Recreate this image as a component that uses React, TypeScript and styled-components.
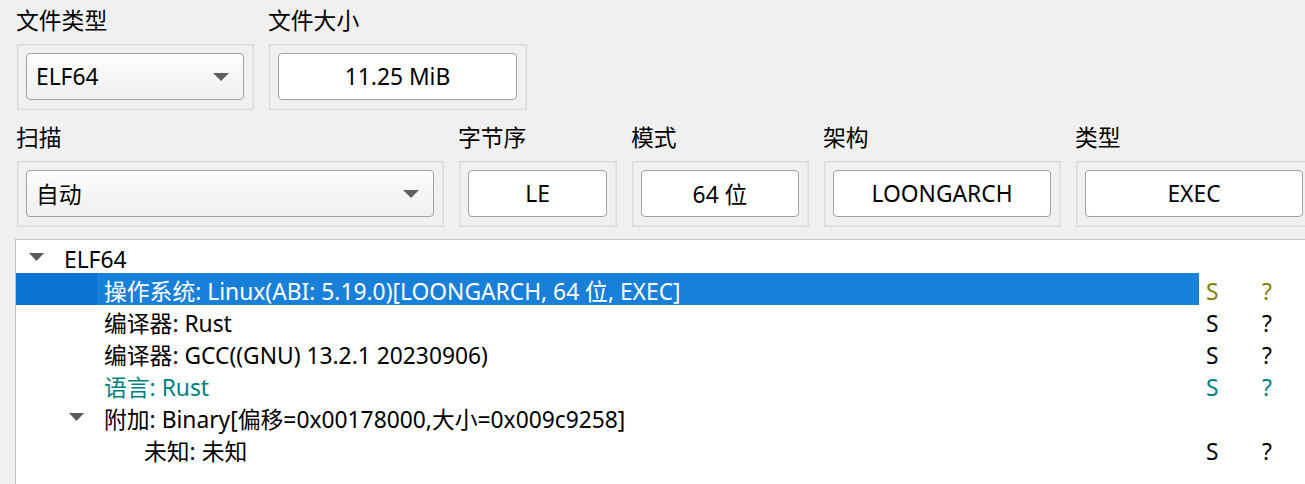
import styled, { createGlobalStyle } from 'styled-components';

const GlobalStyle = createGlobalStyle`
  html, body {
    margin: 0;
    padding: 0;
    background: #f0f0f0;
    overflow: hidden;
  }
  body {
    font-family: "Noto Sans", "Noto Sans CJK SC", sans-serif;
    color: #000;
  }
`;

type Item = {
  level: number;
  text: string;
  expandable?: boolean;
  selected?: boolean;
  tone?: 'olive' | 'teal';
  flags?: boolean;
};

const items: Item[] = [
  { level: 0, text: 'ELF64', expandable: true },
  { level: 1, text: '操作系统: Linux(ABI: 5.19.0)[LOONGARCH, 64 位, EXEC]', selected: true, tone: 'olive', flags: true },
  { level: 1, text: '编译器: Rust', flags: true },
  { level: 1, text: '编译器: GCC((GNU) 13.2.1 20230906)', flags: true },
  { level: 1, text: '语言: Rust', tone: 'teal', flags: true },
  { level: 1, text: '附加: Binary[偏移=0x00178000,大小=0x009c9258]', expandable: true },
  { level: 2, text: '未知: 未知', flags: true },
];

const toneColor = (tone?: 'olive' | 'teal') =>
  tone === 'olive' ? '#808000' : tone === 'teal' ? '#008080' : '#000';

const ComboArrow = () => (
  <svg width="16" height="8" viewBox="0 0 16 8">
    <polygon points="0,0 16,0 8,8" fill="#606060" />
  </svg>
);

const BranchArrow = () => (
  <svg width="15" height="8" viewBox="0 0 15 8">
    <polygon points="0,0 15,0 7.5,8" fill="#5a5a5a" />
  </svg>
);

const App = () => {
  return (
    <Page>
      <GlobalStyle />
      <Form>
        <FieldRow>
          <Field $width={238}>
            <Label>文件类型</Label>
            <Frame>
              <Combo>
                <span>ELF64</span>
                <ComboArrow />
              </Combo>
            </Frame>
          </Field>
          <Field $width={259}>
            <Label>文件大小</Label>
            <Frame>
              <ValueBox>11.25 MiB</ValueBox>
            </Frame>
          </Field>
        </FieldRow>
        <FieldRow>
          <Field $width={428}>
            <Label>扫描</Label>
            <Frame>
              <Combo>
                <span>自动</span>
                <ComboArrow />
              </Combo>
            </Frame>
          </Field>
          <Field $width={159}>
            <Label>字节序</Label>
            <Frame>
              <ValueBox>LE</ValueBox>
            </Frame>
          </Field>
          <Field $width={178}>
            <Label>模式</Label>
            <Frame>
              <ValueBox>64 位</ValueBox>
            </Frame>
          </Field>
          <Field $width={238}>
            <Label>架构</Label>
            <Frame>
              <ValueBox>LOONGARCH</ValueBox>
            </Frame>
          </Field>
          <Field $width={238}>
            <Label>类型</Label>
            <Frame>
              <ValueBox>EXEC</ValueBox>
            </Frame>
          </Field>
        </FieldRow>
      </Form>
      <Tree>
        {items.map((item, i) => (
          <Row key={i}>
            <MainCell $selected={item.selected}>
              <Indent $level={item.level} />
              <Branch>{item.expandable && <BranchArrow />}</Branch>
              <ItemText $selected={item.selected} $color={toneColor(item.tone)}>
                {item.text}
              </ItemText>
            </MainCell>
            <FlagCell $width={56} $color={toneColor(item.tone)}>
              {item.flags ? 'S' : ''}
            </FlagCell>
            <FlagCell $color={toneColor(item.tone)}>{item.flags ? '?' : ''}</FlagCell>
          </Row>
        ))}
      </Tree>
    </Page>
  );
};

export default App;

const Page = styled.div`
  width: 1305px;
  height: 484px;
  overflow: hidden;
  background: #f0f0f0;
`;

const Form = styled.div`
  display: flex;
  flex-direction: column;
  gap: 13px;
  padding: 6px 0 0 16px;
`;

const FieldRow = styled.div`
  display: flex;
  gap: 14px;
  white-space: nowrap;
`;

const Field = styled.div<{ $width: number }>`
  display: flex;
  flex-direction: column;
  gap: 8px;
  width: ${(p) => p.$width}px;
  flex: none;
`;

const Label = styled.div`
  font-size: 22.8px;
  line-height: 30px;
  height: 30px;
`;

const Frame = styled.div`
  border: 1px solid #dadada;
  box-shadow: inset 0 0 0 1px #e7e7e7;
  padding: 8px 9px 9px 8px;
  margin-left: 1px;
`;

const Control = styled.div`
  height: 47px;
  box-sizing: border-box;
  border: 1px solid #a2a2a2;
  border-radius: 4px;
  font-size: 22.8px;
  display: flex;
  align-items: center;
`;

const Combo = styled(Control)`
  justify-content: space-between;
  padding: 0 14px 0 9px;
  background: linear-gradient(to bottom, #fcfcfc, #f0f0f0);
`;

const ValueBox = styled(Control)`
  justify-content: center;
  background: #fff;
`;

const Tree = styled.div`
  margin: 12px 0 0 15px;
  height: 300px;
  background: #fff;
  border-top: 1px solid #c4c4c4;
  border-left: 1px solid #c4c4c4;
  padding-top: 1px;
`;

const Row = styled.div`
  display: flex;
  height: 32px;
  font-size: 22.8px;
  line-height: 32px;
  white-space: nowrap;
`;

const MainCell = styled.div<{ $selected?: boolean }>`
  display: flex;
  width: 1183px;
  flex: none;
  background: ${(p) => (p.$selected ? '#0a74d4' : 'transparent')};
`;

const Indent = styled.div<{ $level: number }>`
  width: ${(p) => p.$level * 40}px;
  flex: none;
`;

const Branch = styled.div`
  width: 41px;
  flex: none;
  display: flex;
  align-items: center;
  justify-content: center;
`;

const ItemText = styled.div<{ $selected?: boolean; $color: string }>`
  flex: 1;
  height: 32px;
  box-sizing: border-box;
  padding: 3px 0 0 7px;
  color: ${(p) => (p.$selected ? '#fff' : p.$color)};
  background: ${(p) => (p.$selected ? '#1980d9' : 'transparent')};
`;

const FlagCell = styled.div<{ $width?: number; $color: string }>`
  width: ${(p) => (p.$width ? `${p.$width}px` : 'auto')};
  flex: ${(p) => (p.$width ? 'none' : '1')};
  height: 32px;
  padding: 3px 0 0 7px;
  box-sizing: border-box;
  color: ${(p) => p.$color};
`;
